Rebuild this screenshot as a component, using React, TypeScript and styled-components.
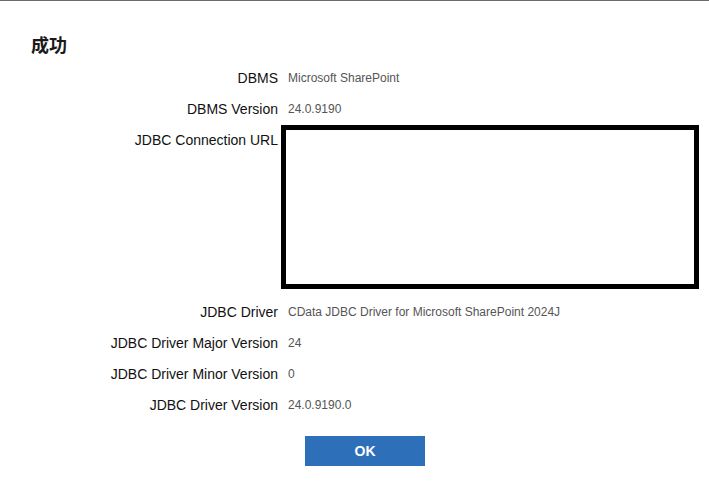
import React from "react";
import styled, { createGlobalStyle } from "styled-components";

const GlobalStyle = createGlobalStyle`
  html, body { margin: 0; padding: 0; background: #ffffff; }
  body { font-family: "Liberation Sans", Arial, sans-serif; }
`;

const Dialog = styled.div`
  border-top: 1px solid #6b6b6b;
  width: 709px;
  height: 481px;
  background: #fff;
  box-sizing: content-box;
`;

const Title = styled.h2`
  margin: 31px 0 7px 31px;
  font-family: "Noto Sans CJK SC", "Noto Sans CJK JP", sans-serif;
  font-size: 18px;
  line-height: 24px;
  font-weight: 700;
  color: #1a1a1a;
`;

const InfoGrid = styled.div`
  display: grid;
  grid-template-columns: 278px 418px;
  column-gap: 3px;
`;

const Label = styled.div`
  padding: 8px 0;
  line-height: 15px;
  font-size: 14px;
  color: #111;
  text-align: right;
`;

const Value = styled.div<{ $boxed?: boolean }>`
  padding: ${(p) => (p.$boxed ? "0 0 8px 0" : "8px 0 8px 7px")};
  line-height: 15px;
  font-size: 12px;
  color: #555;
`;

const RedactBox = styled.div`
  width: 418px;
  height: 164px;
  border: 5px solid #000;
  box-sizing: border-box;
  background: #fff;
`;

const Footer = styled.div`
  display: flex;
  justify-content: center;
  padding: 15px 0 0 21px;
`;

const OkButton = styled.button`
  width: 120px;
  height: 30px;
  border: none;
  background: #2e6fba;
  color: #fff;
  font-family: "Liberation Sans", Arial, sans-serif;
  font-size: 14px;
  font-weight: 700;
  cursor: pointer;
`;

const rows: { label: string; value?: string; boxed?: boolean }[] = [
  { label: "DBMS", value: "Microsoft SharePoint" },
  { label: "DBMS Version", value: "24.0.9190" },
  { label: "JDBC Connection URL", boxed: true },
  { label: "JDBC Driver", value: "CData JDBC Driver for Microsoft SharePoint 2024J" },
  { label: "JDBC Driver Major Version", value: "24" },
  { label: "JDBC Driver Minor Version", value: "0" },
  { label: "JDBC Driver Version", value: "24.0.9190.0" },
];

export default function App() {
  return (
    <>
      <GlobalStyle />
      <Dialog>
        <Title>成功</Title>
        <InfoGrid>
          {rows.map((r) => (
            <React.Fragment key={r.label}>
              <Label>{r.label}</Label>
              <Value $boxed={r.boxed}>{r.boxed ? <RedactBox /> : r.value}</Value>
            </React.Fragment>
          ))}
        </InfoGrid>
        <Footer>
          <OkButton>OK</OkButton>
        </Footer>
      </Dialog>
    </>
  );
}
